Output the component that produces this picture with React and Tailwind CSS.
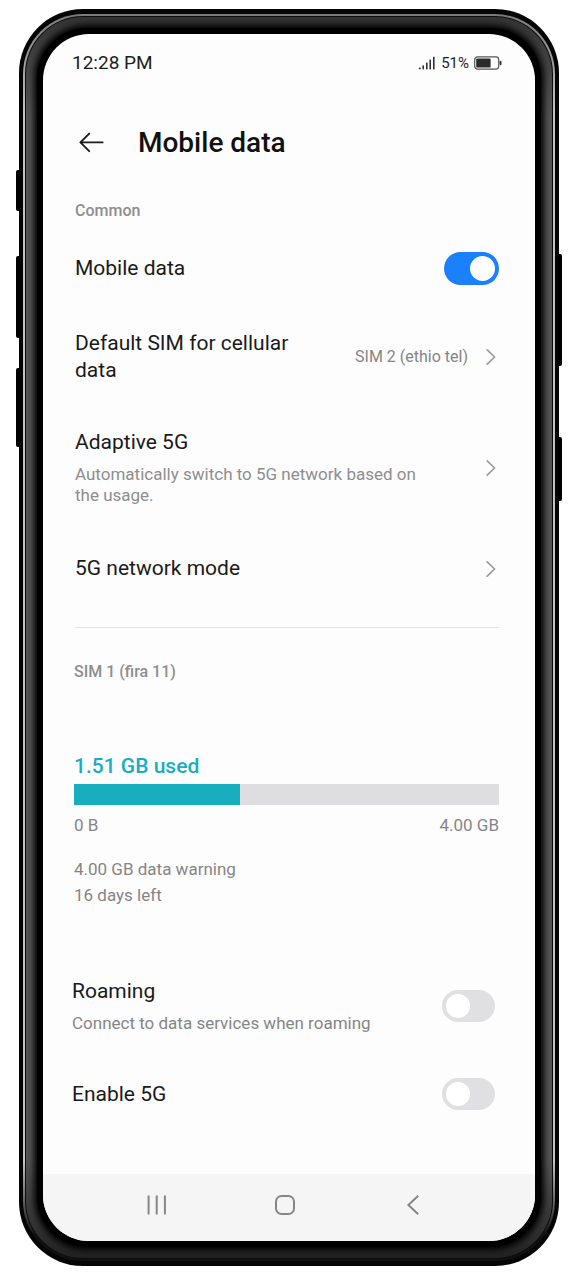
import { useState } from "react";

const Chevron = () => (
  <svg viewBox="0 0 10 18" className="w-[10px] h-[18px] mr-[3px] shrink-0" fill="none">
    <path
      d="M1.2 1.8 L8.6 9 L1.2 16.2"
      stroke="#9b9b9b"
      strokeWidth="1.7"
      strokeLinecap="round"
      strokeLinejoin="round"
    />
  </svg>
);

const Toggle = ({ id, checked, onChange }) => (
  <label htmlFor={id} className="relative shrink-0 cursor-pointer">
    <input
      id={id}
      type="checkbox"
      role="switch"
      checked={checked}
      onChange={(e) => onChange(e.target.checked)}
      className="peer sr-only"
    />
    <span
      className={`flex items-center rounded-full px-1 ${
        checked
          ? "w-[55px] h-[33px] bg-[#1a80fb] justify-end"
          : "w-[53px] h-8 bg-[#e0e0e2] justify-start"
      }`}
    >
      <span className={`rounded-full bg-white ${checked ? "size-[25px]" : "size-6"}`} />
    </span>
  </label>
);

const StatusBar = () => (
  <div className="flex items-center justify-between pt-4 pl-[29px] pr-[33px]">
    <span className="text-[19px] leading-[26px] text-[#1c1c1c]">12:28 PM</span>
    <div className="flex items-center">
      <svg viewBox="0 0 18 14" className="w-[18px] h-[14px]" fill="#333">
        <rect x="0.8" y="11.4" width="1.9" height="1.9" rx="0.6" />
        <rect x="4.4" y="9.4" width="1.6" height="3.9" />
        <rect x="8" y="6.6" width="1.6" height="6.7" />
        <rect x="11.4" y="3.6" width="1.6" height="9.7" />
        <rect x="15" y="0.8" width="1.6" height="12.5" />
      </svg>
      <span className="ml-[5px] text-[15px] leading-5 text-[#1f1f1f]">51%</span>
      <svg viewBox="0 0 28 14" className="ml-[5px] w-7 h-[14px]" fill="none">
        <rect x="0.7" y="0.9" width="24" height="12.2" rx="2.8" stroke="#555" strokeWidth="1.2" />
        <rect x="2.2" y="2.4" width="14.4" height="9.2" rx="1.2" fill="#2b2b2b" />
        <rect x="25.6" y="4.8" width="1.9" height="4.4" rx="0.9" fill="#333" />
      </svg>
    </div>
  </div>
);

const NavBar = () => (
  <nav className="flex items-center justify-between h-[67px] pl-[104px] pr-[112px] pb-1.5 bg-[#f5f5f5]">
    <button type="button" aria-label="Recents">
      <svg viewBox="0 0 20 20" className="size-5" stroke="#868686" strokeWidth="2" fill="none">
        <path d="M1.6 0.5 V19.5 M9.7 0.5 V19.5 M17.9 0.5 V19.5" />
      </svg>
    </button>
    <button type="button" aria-label="Home">
      <svg viewBox="0 0 20 20" className="size-5" stroke="#868686" strokeWidth="2" fill="none">
        <rect x="1" y="1" width="18" height="18" rx="5.5" />
      </svg>
    </button>
    <button type="button" aria-label="Back">
      <svg viewBox="0 0 20 20" className="size-5" stroke="#868686" strokeWidth="2" fill="none">
        <path d="M15.2 0.8 L5.4 10 L15.2 19.2" />
      </svg>
    </button>
  </nav>
);

const SideButtons = () => (
  <>
    <span className="absolute -left-[3px] top-[161px] w-1 h-[41px] rounded-l-xs bg-black" />
    <span className="absolute -left-[3px] top-[247px] w-1 h-[82px] rounded-l-xs bg-black" />
    <span className="absolute -left-[3px] top-[359px] w-1 h-[79px] rounded-l-xs bg-black" />
    <span className="absolute -right-[3px] top-[245px] w-1 h-[112px] rounded-r-xs bg-black" />
    <span className="absolute -right-[3px] top-[428px] w-1 h-[64px] rounded-r-xs bg-black" />
  </>
);

// black shell > metal rim > dark bezel > screen
const PhoneFrame = ({ children }) => (
  <div className="relative px-1 py-[5px] rounded-[64px] bg-[#050505]">
    <SideButtons />
    <div className="p-[2px] rounded-[60px] bg-[linear-gradient(to_bottom,#7a7a7a,#c4c4c4_8%,#c4c4c4_92%,#111_98%)]">
      <div className="p-px rounded-[58px] bg-[#0c0c0c]">
        <div className="p-[11px] rounded-[57px] bg-[linear-gradient(to_bottom,#333,#555_8%,#555_92%,#222)]">
          <div className="p-1.5 rounded-[50px] bg-black shadow-[0_0_6px_3px_#000]">
            <div className="overflow-hidden rounded-[46px] bg-[#fdfdfd]">{children}</div>
          </div>
        </div>
      </div>
    </div>
  </div>
);

const App = () => {
  const [mobileData, setMobileData] = useState(true);
  const [roaming, setRoaming] = useState(false);
  const [enable5G, setEnable5G] = useState(false);

  return (
    <div className="min-h-screen bg-white pt-[9px] pb-3 pl-[19px] pr-4 font-[Roboto,sans-serif] text-[#1a1a1a]">
      <PhoneFrame>
        <StatusBar />

        {/* Header */}
        <header className="flex items-center mt-[49px] pl-9">
          <button type="button" aria-label="Go back">
            <svg viewBox="0 0 26 22" className="w-[26px] h-[22px]" fill="none">
              <path
                d="M23.6 10.4 H1.8 M10.2 1.6 L1.4 10.4 L10.2 19.2"
                stroke="#1c1c1c"
                strokeWidth="1.9"
                strokeLinecap="round"
                strokeLinejoin="round"
              />
            </svg>
          </button>
          <h1 className="ml-[33px] text-[28px] leading-9 font-medium text-[#111]">Mobile data</h1>
        </header>

        <main>
          {/* Common */}
          <section className="pl-8 pr-9">
            <h2 className="mt-[38px] text-base leading-6 font-medium text-[#8e8e8e]">Common</h2>

            <div className="flex items-center justify-between mt-[29px]">
              <label htmlFor="mobile-data" className="text-[21px] leading-[27px]">
                Mobile data
              </label>
              <Toggle id="mobile-data" checked={mobileData} onChange={setMobileData} />
            </div>

            <button type="button" className="flex items-center w-full mt-[45px] text-left">
              <span className="flex-1 text-[21px] leading-[27px]">Default SIM for cellular data</span>
              <span className="ml-10 text-base leading-6 text-[#858585]">SIM 2 (ethio tel)</span>
              <span className="ml-[18px]">
                <Chevron />
              </span>
            </button>

            <button type="button" className="flex items-center w-full mt-[45px] text-left">
              <span className="flex-1 pr-16">
                <span className="block text-[21px] leading-[27px]">Adaptive 5G</span>
                <span className="block mt-2 text-[17px] leading-[21px] text-[#8e8e8e]">
                  Automatically switch to 5G network based on the usage.
                </span>
              </span>
              <Chevron />
            </button>

            <button type="button" className="flex items-center w-full mt-[49px] text-left">
              <span className="flex-1 text-[21px] leading-[27px]">5G network mode</span>
              <Chevron />
            </button>

            <hr className="mt-[45px] border-[#e4e4e4]" />
          </section>

          {/* Data usage */}
          <section className="pl-[31px] pr-9">
            <h2 className="mt-8 text-base leading-6 font-medium text-[#8e8e8e]">SIM 1 (fira 11)</h2>

            <p className="mt-[69px] text-[21px] leading-[27px] font-medium text-[#17aebf]">
              1.51 GB used
            </p>
            <div className="mt-1 h-[21px] bg-[#dedee0]">
              <div className="h-full w-[39%] bg-[#17aebf]" />
            </div>
            <div className="flex justify-between mt-2 text-[17px] leading-6 text-[#858585]">
              <span>0 B</span>
              <span>4.00 GB</span>
            </div>
            <p className="mt-[19px] text-[17px] leading-[26px] text-[#858585]">
              4.00 GB data warning
              <br />
              16 days left
            </p>
          </section>

          <section className="pl-[29px] pr-10 pb-16">
            <div className="flex items-center justify-between mt-[70px]">
              <div>
                <label htmlFor="roaming" className="block text-[21px] leading-[27px]">
                  Roaming
                </label>
                <p className="mt-2 text-[17px] leading-[21px] text-[#858585]">
                  Connect to data services when roaming
                </p>
              </div>
              <Toggle id="roaming" checked={roaming} onChange={setRoaming} />
            </div>

            <div className="flex items-center justify-between mt-11">
              <label htmlFor="enable-5g" className="text-[21px] leading-[27px]">
                Enable 5G
              </label>
              <Toggle id="enable-5g" checked={enable5G} onChange={setEnable5G} />
            </div>
          </section>
        </main>

        <NavBar />
      </PhoneFrame>
    </div>
  );
};

export default App;
